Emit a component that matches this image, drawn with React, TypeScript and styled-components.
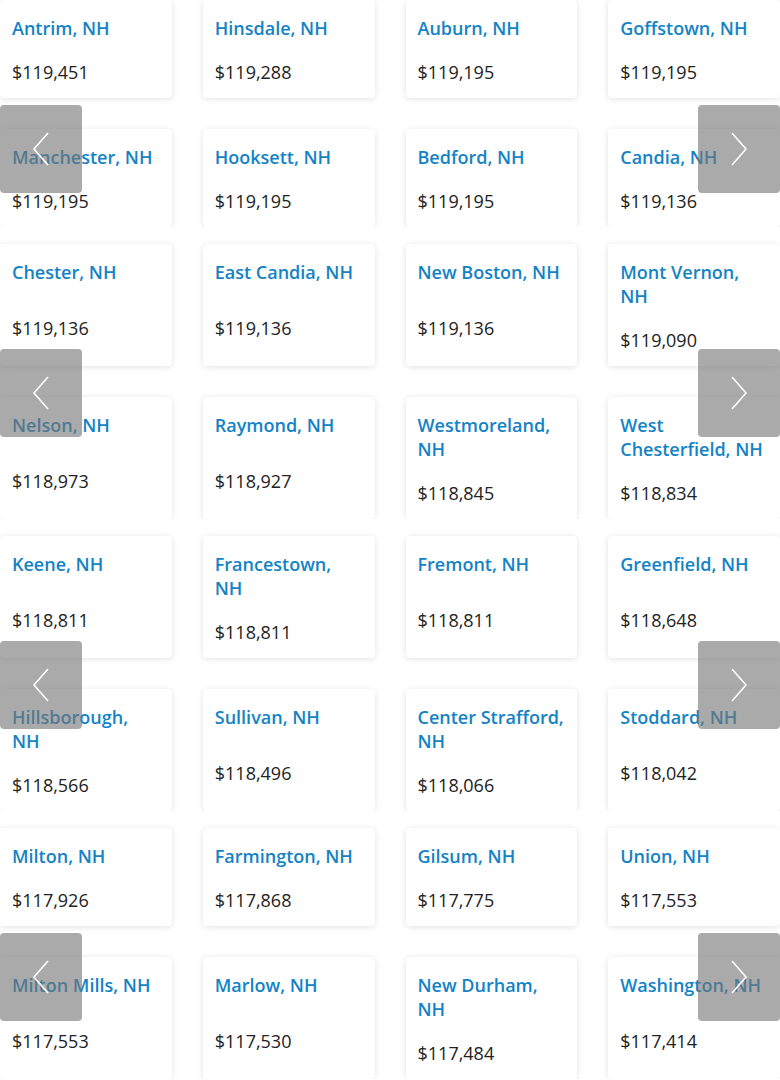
import styled, { createGlobalStyle } from "styled-components";

type Town = { name: string; price: string };

// each group is one carousel: two rows of four towns
// "\n" marks where the long names break in the design
const groups: Town[][] = [
  [
    { name: "Antrim, NH", price: "$119,451" },
    { name: "Hinsdale, NH", price: "$119,288" },
    { name: "Auburn, NH", price: "$119,195" },
    { name: "Goffstown, NH", price: "$119,195" },
    { name: "Manchester, NH", price: "$119,195" },
    { name: "Hooksett, NH", price: "$119,195" },
    { name: "Bedford, NH", price: "$119,195" },
    { name: "Candia, NH", price: "$119,136" },
  ],
  [
    { name: "Chester, NH", price: "$119,136" },
    { name: "East Candia, NH", price: "$119,136" },
    { name: "New Boston, NH", price: "$119,136" },
    { name: "Mont Vernon,\nNH", price: "$119,090" },
    { name: "Nelson, NH", price: "$118,973" },
    { name: "Raymond, NH", price: "$118,927" },
    { name: "Westmoreland,\nNH", price: "$118,845" },
    { name: "West\nChesterfield, NH", price: "$118,834" },
  ],
  [
    { name: "Keene, NH", price: "$118,811" },
    { name: "Francestown,\nNH", price: "$118,811" },
    { name: "Fremont, NH", price: "$118,811" },
    { name: "Greenfield, NH", price: "$118,648" },
    { name: "Hillsborough,\nNH", price: "$118,566" },
    { name: "Sullivan, NH", price: "$118,496" },
    { name: "Center Strafford,\nNH", price: "$118,066" },
    { name: "Stoddard, NH", price: "$118,042" },
  ],
  [
    { name: "Milton, NH", price: "$117,926" },
    { name: "Farmington, NH", price: "$117,868" },
    { name: "Gilsum, NH", price: "$117,775" },
    { name: "Union, NH", price: "$117,553" },
    { name: "Milton Mills, NH", price: "$117,553" },
    { name: "Marlow, NH", price: "$117,530" },
    { name: "New Durham,\nNH", price: "$117,484" },
    { name: "Washington, NH", price: "$117,414" },
  ],
];

export default function App() {
  return (
    <>
      <GlobalStyle />
      <Page>
        {groups.map((towns, g) => (
          <Carousel key={g}>
            <Grid>
              {towns.map((t) => (
                <Card key={t.name}>
                  <Name>{t.name}</Name>
                  <PriceArea>
                    <Price>{t.price}</Price>
                  </PriceArea>
                </Card>
              ))}
            </Grid>
            <Arrow side="left" aria-label="Previous">
              <svg width="20" height="34" viewBox="0 0 20 34">
                <polyline points="17,1 3,17 17,33" fill="none" stroke="#fff" strokeWidth="1.6" />
              </svg>
            </Arrow>
            <Arrow side="right" aria-label="Next">
              <svg width="20" height="34" viewBox="0 0 20 34">
                <polyline points="3,1 17,17 3,33" fill="none" stroke="#fff" strokeWidth="1.6" />
              </svg>
            </Arrow>
          </Carousel>
        ))}
      </Page>
    </>
  );
}

const GlobalStyle = createGlobalStyle`
  body {
    margin: 0;
    background: #fff;
    font-family: "Open Sans", "Noto Sans", sans-serif;
    overflow: hidden;
  }
`;

// page is scrolled a little, so the first carousel's top padding is off screen
const Page = styled.main`
  width: 780px;
  margin-top: -17px;
`;

const Carousel = styled.section`
  position: relative;
  overflow: hidden;
  padding-top: 17px;
`;

const Grid = styled.div`
  display: grid;
  grid-template-columns: repeat(4, 1fr);
  column-gap: 31px;
  row-gap: 31px;
`;

const Card = styled.div`
  display: flex;
  flex-direction: column;
  background: #fff;
  border-radius: 4px;
  box-shadow: 0 1px 6px rgba(0, 0, 0, 0.12);
  padding: 16px 4px 10px 12px;
`;

const Name = styled.a`
  color: #1383c6;
  font-size: 18px;
  line-height: 24px;
  font-weight: 600;
  white-space: pre-line;
  margin-bottom: 16px;
  cursor: pointer;
`;

const PriceArea = styled.div`
  flex: 1;
  min-height: 32px;
  display: flex;
  align-items: center;
`;

const Price = styled.span`
  color: #222;
  font-size: 18px;
  line-height: 24px;
  font-weight: 500;
`;

const Arrow = styled.button<{ side: "left" | "right" }>`
  position: absolute;
  top: 122px;
  ${(p) => (p.side === "left" ? "left: 0;" : "right: 0;")}
  width: 82px;
  height: 88px;
  border: none;
  border-radius: 4px;
  background: rgba(118, 118, 118, 0.62);
  display: flex;
  align-items: center;
  justify-content: center;
  padding: 0;
  cursor: pointer;
`;
